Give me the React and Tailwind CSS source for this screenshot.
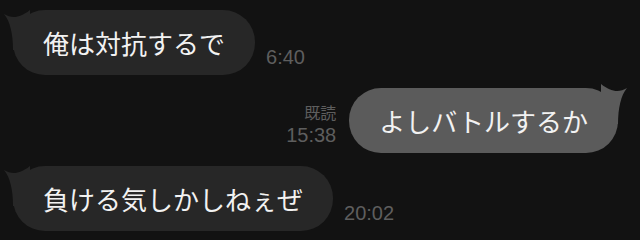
import React from "react";

const jp = { fontFamily: '"Noto Sans CJK JP", "Noto Sans", sans-serif' };

const Tail = ({ color, right }) => (
  <svg
    width="26"
    height="40"
    viewBox="0 0 26 40"
    className={
      right
        ? "absolute -right-[9px] -top-[4px] -scale-x-100"
        : "absolute -left-[9px] top-0"
    }
  >
    <path d="M0 4 C8 9 16 8 26 0 L26 40 L9 40 C9 24 6 11 0 4 Z" fill={color} />
  </svg>
);

const Time = ({ children }) => (
  <span className="text-[20px] leading-none text-[#5e5e5e] mb-[8px] font-['Liberation_Sans',sans-serif]">
    {children}
  </span>
);

const LeftMsg = ({ text, time }) => (
  <div className="flex items-end gap-[11px] pl-[13px]">
    <div
      className="relative h-[65px] flex items-center px-[30px] rounded-[32px] bg-[#272727] text-[26px] text-[#f2f2f2]"
      style={jp}
    >
      <Tail color="#272727" />
      <span className="relative">{text}</span>
    </div>
    <Time>{time}</Time>
  </div>
);

export default function App() {
  return (
    <div className="w-[640px] h-[240px] bg-[#121212] flex flex-col gap-[13px] pt-[10px] overflow-hidden">
      <LeftMsg text="俺は対抗するで" time="6:40" />

      <div className="flex items-end justify-end gap-[13px] pr-[22px]">
        <div className="flex flex-col items-end gap-[4px] mb-[8px] text-[#5e5e5e]">
          <span className="text-[16px] leading-[18px]" style={jp}>既読</span>
          <span className="text-[20px] leading-none font-['Liberation_Sans',sans-serif]">15:38</span>
        </div>
        <div
          className="relative h-[65px] flex items-center px-[30px] rounded-[32px] bg-[#5b5b5b] text-[26px] text-[#f2f2f2]"
          style={jp}
        >
          <Tail color="#5b5b5b" right />
          <span className="relative">よしバトルするか</span>
        </div>
      </div>

      <LeftMsg text="負ける気しかしねぇぜ" time="20:02" />
    </div>
  );
}
